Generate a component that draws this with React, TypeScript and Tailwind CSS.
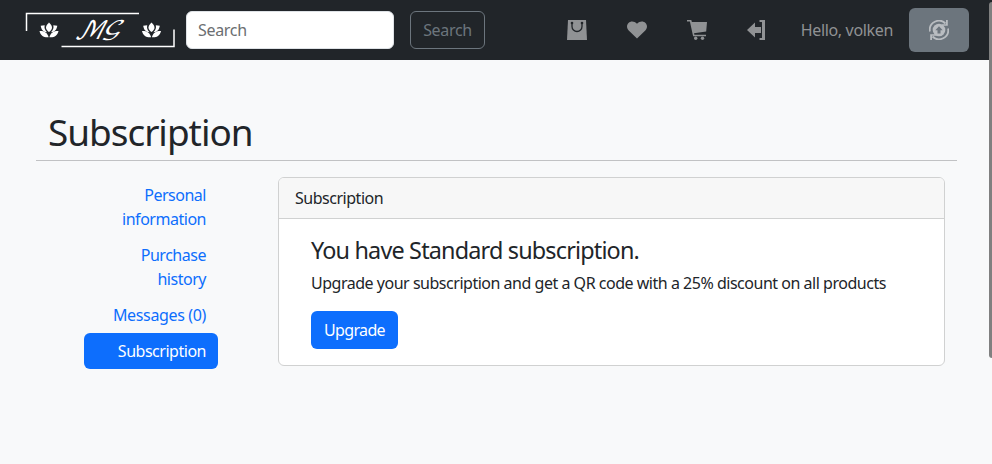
import React from "react";

const Lotus = ({ x }: { x: number }) => (
  <g transform={`translate(${x} 22.500)`} fill="#fff">
    <path d="M9.500 0c2.200 2 3 3.500 3 5.200c0 1.300-1 2.800-3 4.300c-2-1.500-3-3-3-4.300C6.500 3.500 7.300 2 9.500 0z" />
    <path d="M1.200 3.200l4-.4c-.6 2.700 0 4.500 2.300 7C3.500 9.300 1.800 7 1.200 3.200z" />
    <path d="M17.800 3.200l-4-.4c.6 2.700 0 4.500-2.300 7c4-.5 5.700-2.800 6.300-6.600z" />
    <path d="M0 8.500c4.500-.2 8 1.500 9.100 6.300C4 15.200 1 13 0 8.500z" />
    <path d="M19 8.500c-4.500-.2-8 1.500-9.100 6.300c5.100.4 8.100-1.800 9.100-6.300z" />
  </g>
);

const Logo = () => (
  <svg width="150" height="36" viewBox="25 12 150 36" className="block shrink-0">
    <path d="M26.500 31V13.500H139M61.500 46.500H174V29.500" fill="none" stroke="#fff" strokeWidth="1.500" />
    <Lotus x={39.500} />
    <Lotus x={142} />
    <g fill="#fff" fontFamily="'DejaVu Math TeX Gyre', 'DejaVu Sans', serif">
      <text transform="translate(74 39) skewX(-18)" fontSize="25" textLength="29" lengthAdjust="spacingAndGlyphs">ℳ</text>
      <text transform="translate(102 34.500) skewX(-18)" fontSize="20" textLength="19" lengthAdjust="spacingAndGlyphs">𝒢</text>
    </g>
  </svg>
);

const BagIcon = () => (
  <svg width="20" height="20" viewBox="0 0 20 20">
    <path d="M1 0h18l1 20H0z" fill="#909294" />
    <path d="M5 3v3.500a5 5 0 0 0 10 0V3" fill="none" stroke="#212529" strokeWidth="1.300" />
    <circle cx="5" cy="3" r="1.300" fill="#212529" />
    <circle cx="15" cy="3" r="1.300" fill="#212529" />
  </svg>
);

const HeartIcon = () => (
  <svg width="20" height="20" viewBox="0 0 20 20">
    <path d="M10 18.500L1.700 10.500C-.5 8.200-.5 5 1.500 3C3.600.8 7.300.9 10 3.700C12.700.9 16.400.8 18.500 3c2 2 2 5.200-.2 7.500z" fill="#909294" />
  </svg>
);

const CartIcon = () => (
  <svg width="20" height="20" viewBox="0 0 20 20" fill="#909294">
    <path d="M0 0h4.300l.6 2H20l-.8 9.500L7 13.200l.4 1.500H19v1.500H6.100L2.900 1.500H0z" />
    <circle cx="8.700" cy="18.300" r="1.700" />
    <circle cx="15.500" cy="18.300" r="1.700" />
  </svg>
);

const ExitIcon = () => (
  <svg width="20" height="20" viewBox="0 0 20 20" fill="#909294">
    <path d="M0 10l8-7.500V7h6v6H8v4.500z" />
    <path d="M12.500 0H18v20h-5.500v-2H15V2h-2.500z" />
  </svg>
);

const UpgradeIcon = () => (
  <svg width="20" height="20" viewBox="0 0 20 20">
    <circle cx="10" cy="10" r="6.300" fill="#b9bdc1" />
    <path d="M10 6.300l3.700 4h-2.200v3.200h-3v-3.200H6.300z" fill="#6c757d" />
    <path d="M.9 11.500A9.200 9.200 0 0 1 16.500 3.500M19.100 8.500A9.200 9.200 0 0 1 3.500 16.500" fill="none" stroke="#b9bdc1" strokeWidth="1.800" />
    <path d="M18.800 0v5.700h-6v-1.500h4.200V0zM1.200 20v-5.700h6v1.500H3V20z" fill="#b9bdc1" />
  </svg>
);

export default function App() {
  return (
    <div className="relative h-[464px] w-[992px] overflow-hidden bg-[#f8f9fa] text-base tracking-[-0.03em] text-[#212529] [font-family:'Noto_Sans',sans-serif]">
      <nav className="flex h-[60px] items-center bg-[#212529] pl-[25px] pr-[23px]">
        <Logo />
        <input
          aria-label="Search"
          placeholder="Search"
          className="ml-[11px] h-[38px] w-52 rounded-md border border-[#dee2e6] bg-white px-[11px] tracking-[-0.02em] placeholder:text-[#6b6e71]"
        />
        <button className="ml-4 h-[38px] w-[75px] rounded-md border border-[#6c757d] tracking-[-0.02em] text-[#6c757d]">Search</button>
        <div className="ml-[82px] flex gap-10">
          <BagIcon />
          <HeartIcon />
          <CartIcon />
          <ExitIcon />
        </div>
        <span className="ml-auto whitespace-nowrap tracking-[-0.021em] text-[#909294]">Hello, volken</span>
        <button className="ml-4 flex h-11 w-[60px] items-center justify-center rounded-md bg-[#6c757d]">
          <UpgradeIcon />
        </button>
      </nav>
      <main className="pl-9 pr-[35px] pt-12">
        <h1 className="h-[52px] pl-3 text-[36.9px] leading-12 tracking-[-0.027em]">Subscription</h1>
        <hr className="border-[#c1c2c4]" />
        <div className="flex items-start pl-12 pt-4">
          <ul className="w-[134px] text-right text-[#0d6efd]">
            <li className="px-3 py-1.5">Personal<br />information</li>
            <li className="px-3 py-1.5">Purchase<br />history</li>
            <li className="px-3 py-1.5 tracking-[-0.022em]">Messages (0)</li>
            <li className="rounded-md bg-[#0d6efd] px-3 py-1.5 text-white">Subscription</li>
          </ul>
          <section className="ml-[60px] h-[189px] w-[667px] overflow-hidden rounded-md border border-[#d0d1d1] bg-white">
            <header className="h-[41px] border-b border-[#d0d1d1] bg-[#f7f7f7] px-4 py-2">Subscription</header>
            <div className="px-8 pt-4">
              <h2 className="text-[23.4px] leading-[30px] tracking-[-0.035em]">You have Standard subscription.</h2>
              <p className="mt-1.5 whitespace-nowrap">Upgrade your subscription and get a QR code with a 25% discount on all products</p>
              <button className="mt-4 h-[38px] w-[87px] rounded-md bg-[#0d6efd] tracking-[-0.04em] text-white">Upgrade</button>
            </div>
          </section>
        </div>
      </main>
      <div className="absolute right-0 top-0.5 h-[356px] w-[3px] rounded-l-sm bg-[#808080]" />
    </div>
  );
}
